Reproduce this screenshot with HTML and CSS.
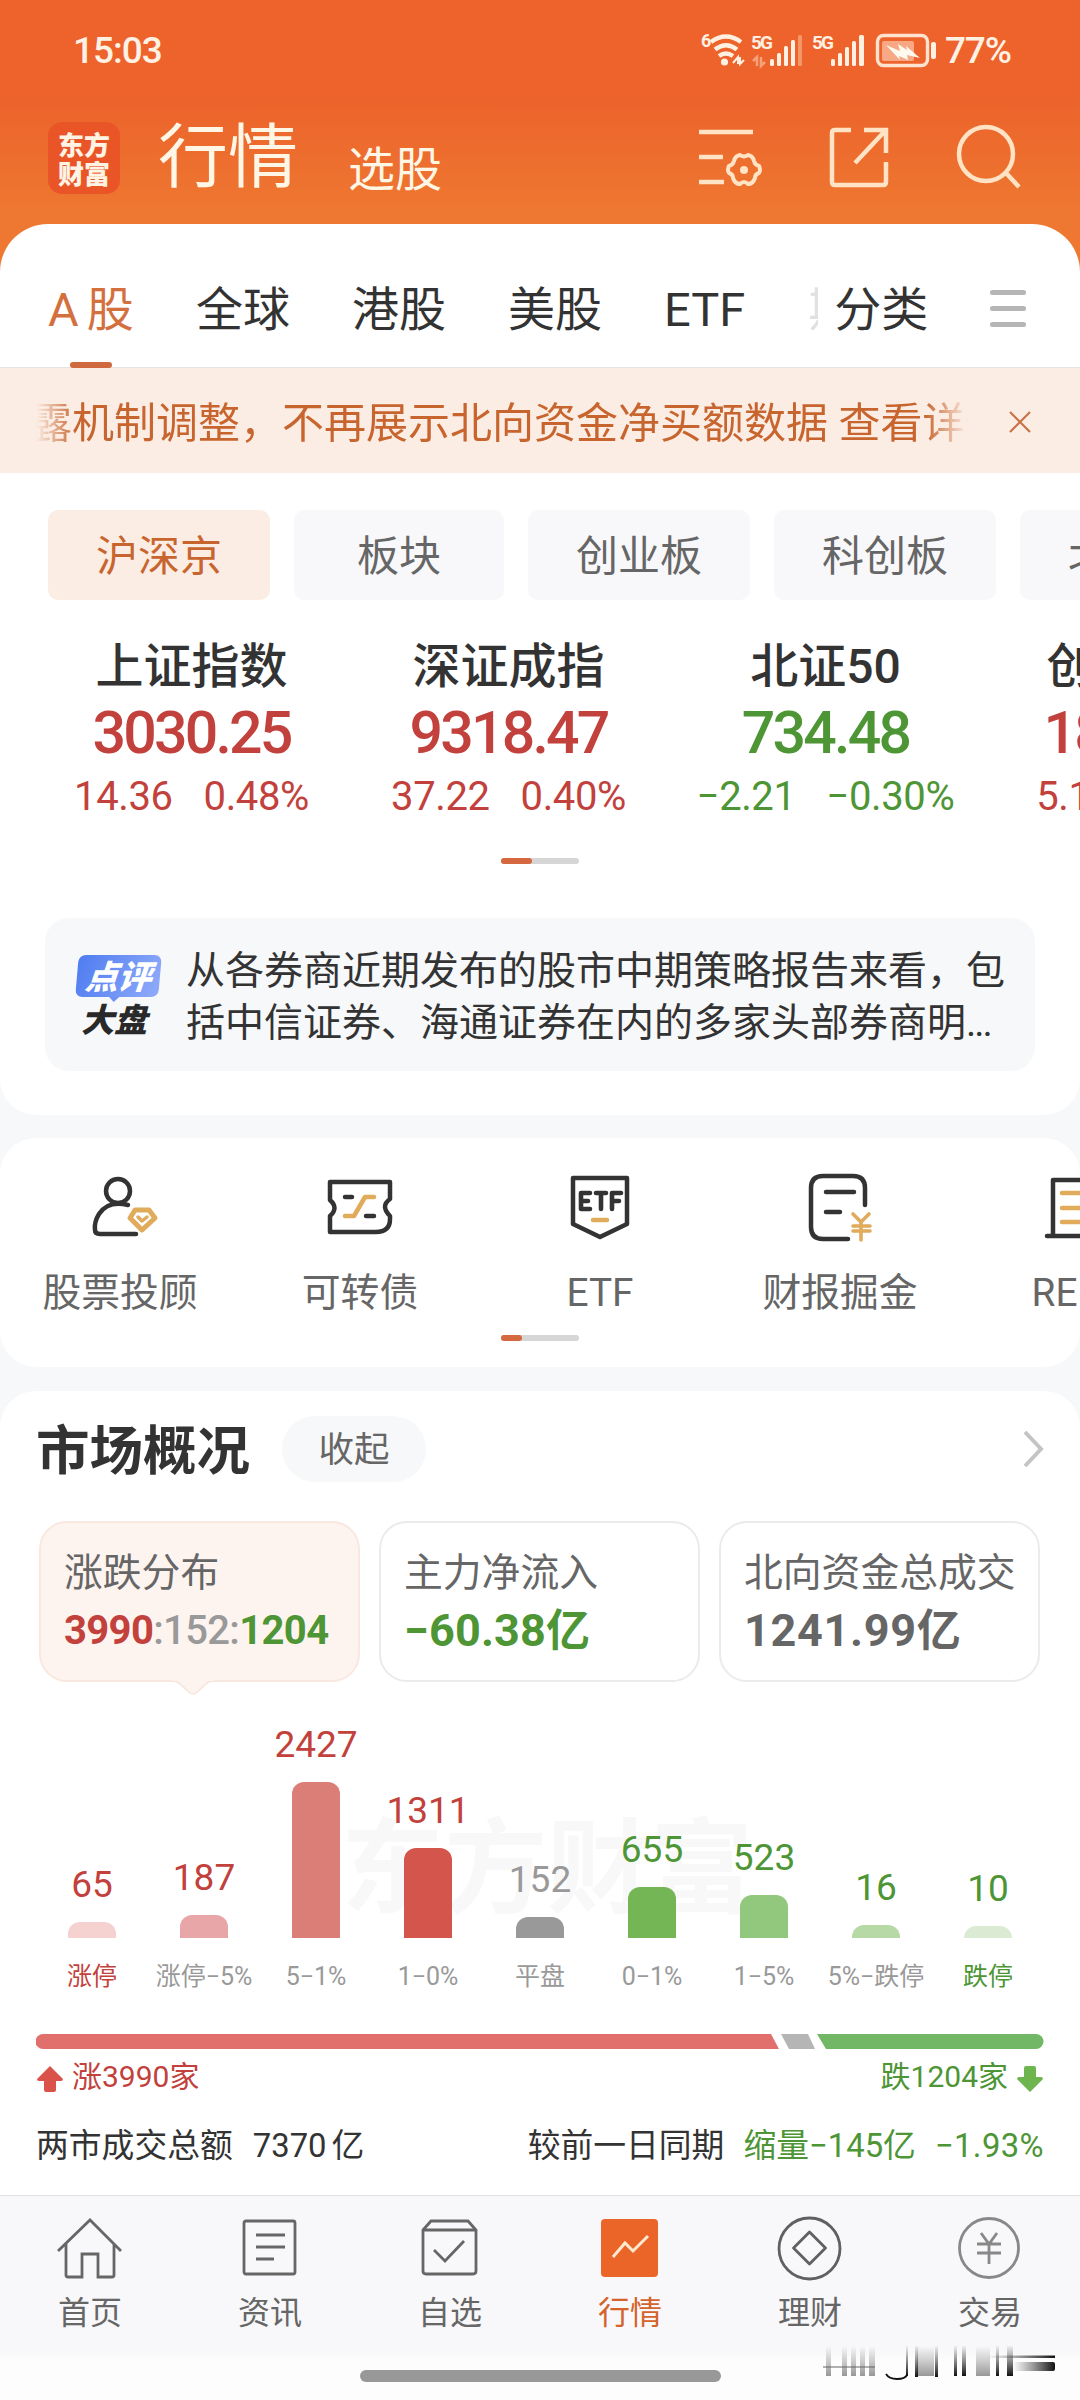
FILE: index.html
```html
<!DOCTYPE html>
<html lang="zh-CN">
<head>
<meta charset="utf-8">
<title>行情</title>
<link rel="stylesheet" href="styles.css">
</head>
<body>
<div class="app">
  <header class="top">
    <div class="status">
      <span class="time">15:03</span>
      <svg class="status-icons" width="240" height="40" viewBox="0 0 240 40" fill="none">
        <text x="1" y="17" class="tiny">6</text>
        <g stroke="#fff0e2" stroke-width="4.4">
          <path d="M11 12Q26 1 41 12M15 19.500Q26 11 37 19.500M19 26Q26 21 33 26"/>
        </g>
        <circle cx="24.500" cy="32" r="3.600" fill="#fff0e2"/>
        <path d="M33 33l5-6v7M40 27v7l4-4" stroke="#fff0e2" stroke-width="2"/>
        <text x="51" y="19" class="tiny g">5G</text>
        <path d="M53 31l4-4v9M61 27v9l4-4" stroke="#f6a27b" stroke-width="2.500"/>
        <g fill="#fff0e2">
          <rect x="70" y="29" width="4" height="7" rx="1.500"/><rect x="77" y="23" width="4" height="13" rx="1.500"/><rect x="84" y="16" width="4" height="20" rx="1.500"/><rect x="91" y="10" width="4" height="26" rx="1.500"/>
          <rect x="98" y="5" width="4" height="31" rx="1.500" fill="#f59669"/>
          <rect x="131" y="29" width="4" height="7" rx="1.500"/><rect x="138" y="23" width="4" height="13" rx="1.500"/><rect x="145" y="17" width="4" height="19" rx="1.500"/><rect x="152" y="11" width="4" height="25" rx="1.500"/><rect x="159" y="5" width="5" height="31" rx="1.500"/>
          <rect x="231" y="12" width="5" height="17" rx="2"/>
        </g>
        <text x="112" y="19" class="tiny g">5G</text>
        <rect x="177.500" y="5.500" width="50" height="30" rx="6" stroke="#ffe3cf" stroke-width="3.400"/>
        <rect x="182" y="11" width="32" height="20" rx="2" fill="#f9a885"/>
        <path d="M186 15l14 6-2-7 9 6-1-4 14 12-13-3 1 5-9-4 1 4z" fill="#fffaf0"/>
      </svg>
      <span class="battery">77%</span>
    </div>
    <div class="titlebar">
      <div class="logo">东方<br>财富</div>
      <h1>行情</h1>
      <span class="pick">选股</span>
      <div class="tools">
        <svg width="66" height="68" viewBox="0 0 66 68" fill="none" stroke="#ffe3c4" stroke-width="4.500">
          <path d="M2 11h54M2 36h24M2 61h25"/>
          <path stroke-width="4" stroke-linejoin="round" d="M43 34q4 3 8 0q5 1 6 6q1 4 5 5q2 4 0 7q-4 1-4 5q-2 6-7 6q-4-4-8 0q-5 0-7-6q0-4-4-5q-2-3 0-7q4-1 5-5q1-5 6-6z"/>
          <circle cx="47" cy="49" r="4" fill="#ffe3c4" stroke="none"/>
        </svg>
        <svg width="62" height="68" viewBox="0 0 62 68" fill="none" stroke="#ffe3c4" stroke-width="4.500">
          <path d="M23 9H7Q4 9 4 12V61Q4 64 7 64H55Q58 64 58 61V41M36 9H58V32M57 10L27 42"/>
        </svg>
        <svg width="66" height="68" viewBox="0 0 66 68" fill="none" stroke="#ffe3c4" stroke-width="4.500">
          <circle cx="31" cy="33" r="27"/><path d="M51 52L64 66"/>
        </svg>
      </div>
    </div>
  </header>

  <main>
    <section class="card first">
      <nav class="tabs">
        <span class="tab on">A<i></i>股</span><span class="tab">全球</span><span class="tab">港股</span><span class="tab">美股</span><span class="tab">ETF</span>
        <span class="cut">期</span>
        <span class="sort">分类</span>
        <span class="menu"><i></i><i></i><i></i></span>
      </nav>
      <div class="notice">
        <p>露机制调整，不再展示北向资金净买额数据 查看详情</p>
        <svg width="22" height="22" viewBox="0 0 22 22" stroke="#c97346" stroke-width="2.200"><path d="M1 1L21 21M21 1L1 21"/></svg>
      </div>
      <div class="chips">
        <span class="chip on">沪深京</span><span class="chip short">板块</span><span class="chip">创业板</span><span class="chip">科创板</span><span class="chip">北交所</span>
      </div>
      <div class="indices">
        <div class="index up"><h3>上证指数</h3><b>3030.25</b><p><span>14.36</span><span>0.48%</span></p></div>
        <div class="index up"><h3>深证成指</h3><b>9318.47</b><p><span>37.22</span><span>0.40%</span></p></div>
        <div class="index down"><h3>北证50</h3><b>734.48</b><p><span>−2.21</span><span>−0.30%</span></p></div>
        <div class="index up"><h3>创业板指</h3><b>1802.91</b><p><span>5.16</span><span>0.29%</span></p></div>
      </div>
      <div class="pager"><i class="wide"></i></div>
      <div class="comment">
        <div class="badge">
          <span class="bubble"><em>点评</em></span>
          <em class="market">大盘</em>
        </div>
        <p>从各券商近期发布的股市中期策略报告来看，包<br>括中信证券、海通证券在内的多家头部券商明<span class="dots">...</span></p>
      </div>
    </section>

    <section class="card shortcuts">
      <div class="links">
        <div class="link">
          <svg width="80" height="76" viewBox="0 0 80 76" fill="none" stroke="#333" stroke-width="4.500" stroke-linecap="round" stroke-linejoin="round">
            <circle cx="38" cy="22" r="12"/>
            <path d="M48 36Q28 31 19 45Q14 53 15 61Q15 65 20 65H56"/>
            <path stroke="#e0ab5b" stroke-width="5" d="M55 41H69L75 49L62 61L50 49Z"/>
            <path stroke="#e0ab5b" stroke-width="3.500" d="M58 48L62 52L67 48"/>
          </svg>
          <span>股票投顾</span>
        </div>
        <div class="link">
          <svg width="80" height="76" viewBox="0 0 80 76" fill="none" stroke="#333" stroke-width="4.500" stroke-linecap="round" stroke-linejoin="round">
            <path d="M10 13H70V30Q60 37 70 47V50Q70 63 56 63H10V47Q19 39 10 31Z"/>
            <path d="M25 28H32M46 47H54"/><path stroke="#e0ab5b" d="M25 47H34L45 28H54"/>
          </svg>
          <span>可转债</span>
        </div>
        <div class="link">
          <svg width="80" height="76" viewBox="0 0 80 76" fill="none" stroke="#333" stroke-width="4.500" stroke-linecap="round" stroke-linejoin="round">
            <path d="M13 9H67V55L40 68L13 55Z"/>
            <path stroke-width="4.600" d="M30 24H21V40H30M21 32H28M36 24H46M41 24V40M61 24H52V40M52 32H59"/>
            <path stroke="#e0ab5b" d="M33 51H47"/>
          </svg>
          <span>ETF</span>
        </div>
        <div class="link">
          <svg width="80" height="76" viewBox="-7 0 80 76" fill="none" stroke="#333" stroke-width="4.500" stroke-linecap="round" stroke-linejoin="round">
            <path d="M58 36V19Q58 7 46 7H16Q4 7 4 19V58Q4 70 16 70H41M19 23H47M19 43H33"/>
            <path stroke="#e0ab5b" stroke-width="3.600" d="M46 45L54 53L62 45M46 57H63M46 62H63M54 53V71"/>
          </svg>
          <span>财报掘金</span>
        </div>
        <div class="link">
          <svg width="80" height="76" viewBox="0 0 80 76" fill="none" stroke="#333" stroke-width="4.500" stroke-linecap="round" stroke-linejoin="round">
            <path d="M13 67V11H66V67M7 67H73"/><path stroke="#e0ab5b" d="M22 24H56M22 39H56M22 53H56"/>
          </svg>
          <span>REITs</span>
        </div>
      </div>
      <div class="pager"><i></i></div>
    </section>

    <section class="card overview">
      <div class="heading">
        <h2>市场概况</h2><span class="fold">收起</span>
        <svg width="22" height="38" viewBox="0 0 22 38" fill="none" stroke="#c4c4c4" stroke-width="4"><path d="M3 2L19 19L3 36"/></svg>
      </div>
      <div class="boxes">
        <div class="box on"><h4>涨跌分布</h4><b class="ratio"><span class="red">3990</span><span class="gray">:152:</span><span class="green">1204</span></b>
          <svg class="tip" width="40" height="16" viewBox="0 0 40 16"><path d="M0 1Q4 1 7 4L17 13Q20 15 23 13L33 4Q36 1 40 1" fill="#fdf4f0" stroke="#f7e3da" stroke-width="1.500"/><path d="M0 0H40V1H0Z" fill="#fdf4f0"/></svg>
        </div>
        <div class="box"><h4>主力净流入</h4><b class="green">−60.38<span>亿</span></b></div>
        <div class="box"><h4>北向资金总成交</h4><b class="wider">1241.99<span>亿</span></b></div>
      </div>
      <div class="chart">
        <span class="watermark">东方财富</span>
        <div class="col red"><span>65</span><i class="bar" style="height:16px;background:#f5d1d0"></i><small>涨停</small></div>
        <div class="col red"><span>187</span><i class="bar" style="height:23px;background:#e9a6a9"></i><small class="mute">涨停−5%</small></div>
        <div class="col red"><span>2427</span><i class="bar" style="height:156px;background:#dc7e78"></i><small class="mute">5−1%</small></div>
        <div class="col red"><span>1311</span><i class="bar" style="height:90px;background:#d4554c"></i><small class="mute">1−0%</small></div>
        <div class="col gray"><span>152</span><i class="bar" style="height:21px;background:#999"></i><small class="mute">平盘</small></div>
        <div class="col green"><span>655</span><i class="bar" style="height:51px;background:#74b655"></i><small class="mute">0−1%</small></div>
        <div class="col green"><span>523</span><i class="bar" style="height:43px;background:#92c87d"></i><small class="mute">1−5%</small></div>
        <div class="col green"><span>16</span><i class="bar" style="height:13px;background:#b6d9a5"></i><small class="mute">5%−跌停</small></div>
        <div class="col green"><span>10</span><i class="bar" style="height:12px;background:#dbebd3"></i><small>跌停</small></div>
      </div>
      <svg class="split" width="1008" height="15" viewBox="0 0 1008 15">
        <path d="M7 0H735L743 15H7A7.500 7.500 0 0 1 7 0Z" fill="#e1706d"/><path d="M745 0H772L779 15H753Z" fill="#b5b5b5"/><path d="M781 0H1000A7.500 7.500 0 0 1 1000 15H790Z" fill="#72b765"/>
      </svg>
      <div class="counts">
        <span class="red"><svg width="26" height="26" viewBox="0 0 26 26" fill="#d9534a"><path d="M13 0L26 13Q26 15 24 15H19V24Q19 26 17 26H9Q7 26 7 24V15H2Q0 15 0 13Z"/></svg>涨3990家</span>
        <span class="green">跌1204家<svg width="26" height="26" viewBox="0 0 26 26" fill="#6fb54f"><path d="M13 26L26 13Q26 11 24 11H19V2Q19 0 17 0H9Q7 0 7 2V11H2Q0 11 0 13Z"/></svg></span>
      </div>
      <div class="turnover">
        <span>两市成交总额</span><span class="amount">7370<i></i>亿</span>
        <span class="prev">较前一日同期</span><span class="green vol">缩量−145亿</span><span class="green rate">−1.93%</span>
      </div>
    </section>
  </main>

  <footer class="tabbar">
    <div class="items">
      <div class="item"><svg width="68" height="66" viewBox="0 0 68 66" fill="none" stroke="#666" stroke-width="2.800"><path d="M2 36L34 5L65 36M10 29V60Q10 62 12 62H26V39H42V62H56Q58 62 58 60V29"/></svg><span>首页</span></div>
      <div class="item"><svg width="68" height="66" viewBox="0 0 68 66" fill="none" stroke="#666" stroke-width="2.800"><rect x="8" y="6" width="51" height="53" rx="2"/><path d="M20 20H49M20 32H49M20 44H38"/></svg><span>资讯</span></div>
      <div class="item"><svg width="68" height="66" viewBox="0 0 68 66" fill="none" stroke="#666" stroke-width="2.800"><path d="M7 15L15 6H52L60 15V56Q60 59 57 59H10Q7 59 7 56ZM7 15H60"/><path d="M18 35L29 46L48 26"/></svg><span>自选</span></div>
      <div class="item on"><svg width="68" height="66" viewBox="0 0 68 66" fill="none"><rect x="5" y="4" width="57" height="58" rx="4" fill="#eb6428"/><path d="M17 42L29 28L37 36L52 21" stroke="#ffe9cf" stroke-width="3"/></svg><span>行情</span></div>
      <div class="item"><svg width="68" height="66" viewBox="0 0 68 66" fill="none" stroke="#606060" stroke-width="2.800"><circle cx="33.500" cy="33.500" r="30.500"/><path stroke-linejoin="round" d="M33.500 17L49.500 33L33.500 49L17.500 33Z"/></svg><span>理财</span></div>
      <div class="item"><svg width="68" height="66" viewBox="0 0 68 66" fill="none" stroke="#888" stroke-width="2.800"><circle cx="33" cy="33" r="29.500"/><path d="M25 18L33 29L41 18M21 29H45M21 38H45M33 29V49"/></svg><span>交易</span></div>
    </div>
    <div class="gesture"><i></i></div>
    <svg class="smear" width="236" height="42" viewBox="0 0 236 42">
      <defs>
        <linearGradient id="down" x1="0" y1="0" x2="0" y2="1"><stop offset="0" stop-color="#555" stop-opacity="0"/><stop offset="1" stop-color="#444" stop-opacity=".55"/></linearGradient>
        <linearGradient id="dark" x1="0" y1="0" x2="0" y2="1"><stop offset="0" stop-color="#333" stop-opacity=".05"/><stop offset="1" stop-color="#111"/></linearGradient>
        <linearGradient id="side" x1="0" y1="0" x2="1" y2="0"><stop offset="0" stop-color="#444" stop-opacity="0"/><stop offset="1" stop-color="#111"/></linearGradient>
      </defs>
      <g fill="url(#down)"><rect x="3" y="1" width="5" height="30"/><rect x="19" y="1" width="5" height="30"/><rect x="28" y="1" width="5" height="30"/><rect x="37" y="1" width="5" height="30"/><rect x="46" y="1" width="6" height="30"/><rect x="94" y="1" width="17" height="30"/><rect x="153" y="1" width="14" height="30"/></g>
      <g fill="url(#dark)"><rect x="83" y="1" width="2" height="30"/><rect x="92" y="1" width="3" height="31"/><rect x="112" y="1" width="3" height="31"/><rect x="131" y="1" width="3" height="30"/><rect x="139" y="1" width="4" height="30"/><rect x="173" y="1" width="3" height="30"/><rect x="184" y="1" width="6" height="30"/></g>
      <path d="M63 29Q66 34 74 34Q82 34 84 30" fill="none" stroke="#111" stroke-width="1.800"/>
      <rect x="0" y="21" width="52" height="2" fill="#666" fill-opacity=".5"/>
      <rect x="165" y="10.500" width="67" height="2.500" fill="url(#side)"/><rect x="190" y="17" width="42" height="9" rx="2" fill="url(#side)"/>
    </svg>
  </footer>
</div>
</body>
</html>
```

FILE: styles.css
```css
* { box-sizing: border-box; margin: 0; padding: 0; }
i { font-style: normal; }
html, body { width: 1080px; height: 2400px; overflow: hidden; }
body { font-family: Roboto, "Noto Sans CJK SC", sans-serif; color: #333; background: #f7f8fa; }
.app { display: flex; flex-direction: column; width: 1080px; height: 2400px; overflow: hidden; }
svg { display: block; flex: none; }
.red { color: #c2413c; }
.green { color: #4d9535; }
.gray { color: #999; }

/* header */
.top { height: 275px; margin-bottom: -50px; background: linear-gradient(#ee632b 0, #ec632b 100px, #ee7831 215px, #ee7831 100%); }
.status { display: flex; align-items: center; height: 100px; padding: 0 66px 0 73px; color: #fff1e4; font-size: 37px; font-weight: 500; }
.time { letter-spacing: -1px; }
.status-icons { margin: 0 5px 0 auto; }
.tiny { font: 700 18px Roboto, sans-serif; fill: #fff0e2; }
.tiny.g { font-size: 19px; letter-spacing: -2px; }
.battery { width: 69px; letter-spacing: -1.200px; }
.titlebar { display: flex; align-items: center; height: 116px; padding: 0 58px 0 48px; color: #fff6e6; }
.logo { width: 72px; height: 72px; padding-top: 7px; border-radius: 14px; background: #ea5528; color: #fff3e4; font: 900 26px/29px "Noto Sans CJK SC", sans-serif; text-align: center; }
.titlebar h1 { margin-left: 38px; font-size: 70px; line-height: 76px; font-weight: 400; }
.pick { margin-left: 50px; font-size: 47px; line-height: 60px; padding-top: 24px; }
.tools { display: flex; margin-left: auto; gap: 65px; width: 325px; padding-bottom: 6px; }

/* cards */
.card { background: #fff; position: relative; }
.first { height: 891px; border-radius: 48px 48px 36px 36px; overflow: hidden; }
.tabs { display: flex; align-items: center; height: 144px; padding: 28px 0 0 48px; border-bottom: 1px solid #e6e2df; font-size: 47px; line-height: 60px; }
.tab { margin-right: 62px; position: relative; }
.tab.on { color: #d4703e; width: 86px; white-space: nowrap; }
.tab.on i { display: inline-block; width: 8px; }
.tab.on::after { content: ""; position: absolute; left: 22px; bottom: -28px; width: 42px; height: 6px; border-radius: 3px; background: #d06a3e; }
.cut { width: 10px; margin-left: 1px; overflow: hidden; color: #333; opacity: .14; }
.sort { margin-left: 16px; }
.menu { display: flex; flex-direction: column; gap: 11px; width: 36px; margin: -3px 54px 0 auto; }
.menu i { height: 5px; border-radius: 3px; background: #b5b5b5; }
.notice { display: flex; align-items: center; height: 105px; padding: 2px 49px 0 30px; background: #fbede4; color: #c8652f; }
.notice p { width: 939px; overflow: hidden; white-space: nowrap; font-size: 42px; line-height: 60px; padding-top: 4px; mask-image: linear-gradient(90deg, transparent 6px, #000 46px, #000 895px, transparent 938px); }
.notice svg { margin-left: auto; }
.chips { display: flex; gap: 24px; width: 1300px; padding: 37px 0 0 48px; }
.chip { width: 222px; height: 90px; border-radius: 10px; background: #f8f8fa; color: #666; font-size: 42px; line-height: 94px; text-align: center; flex: none; }
.chip.short { width: 210px; }
.chip.on { background: #fbede4; color: #c8652f; }
.indices { display: flex; width: 1300px; margin-left: 33px; padding-top: 37px; }
.index { width: 317px; text-align: center; }
.index h3 { font-size: 48px; line-height: 60px; font-weight: 500; color: #333; }
.index b { display: block; margin-top: 4px; font-size: 59px; line-height: 64px; font-weight: 500; letter-spacing: -2.800px; }
.index p { display: flex; justify-content: center; gap: 31px; margin-top: 7px; font-size: 40px; line-height: 50px; letter-spacing: -.4px; }
.index.up { color: #c2413c; }
.index.down { color: #4d9535; }
.pager { width: 78px; height: 6px; margin: 36px auto 0; border-radius: 3px; background: #d6d6d6; }
.pager i { display: block; width: 21px; height: 6px; border-radius: 3px; background: #d5683f; }
.pager i.wide { width: 31px; }
.comment { display: flex; width: 990px; height: 153px; margin: 54px 0 0 45px; padding: 27px 0 0 29px; border-radius: 24px; background: #f7f8fa; }
.badge { display: flex; flex-direction: column; width: 112px; padding: 10px 0 0 3px; }
.bubble { width: 83px; height: 42px; border-radius: 7px; background: linear-gradient(110deg, #4f7cf0, #8fabfa); transform: skewX(-5deg); color: #fff; text-align: center; position: relative; }
.bubble::after { content: ""; position: absolute; left: 34px; bottom: -5px; border: 5px solid transparent; border-top-color: #6d92f4; border-bottom: 0; }
.badge em { font: italic 900 33px/40px "Noto Sans CJK SC", sans-serif; display: block; }
.badge .market { margin: 1px 0 0 4px; font-size: 33px; line-height: 40px; color: #292929; }
.comment p { font-size: 39px; line-height: 52px; color: #333; white-space: nowrap; }
.dots { letter-spacing: -2px; }

.shortcuts { height: 229px; margin-top: 23px; padding-top: 31px; border-radius: 36px; overflow: hidden; }
.links { display: flex; width: 1200px; }
.link { display: flex; flex-direction: column; align-items: center; width: 240px; color: #666; font-size: 38.800px; line-height: 50px; }
.link span { margin-top: 23px; }
.shortcuts .pager { margin-top: 17px; }

.overview { height: 804px; margin-top: 24px; padding: 0 36px; border-radius: 36px 36px 0 0; }
.heading { display: flex; align-items: center; height: 116px; }
.heading h2 { padding-top: 5px; font-size: 53.500px; line-height: 70px; font-weight: 700; }
.fold { width: 144px; height: 66px; margin-left: 32px; border-radius: 33px; background: #f6f8f9; color: #666; font-size: 35.500px; line-height: 69px; text-align: center; }
.heading svg { margin-left: auto; }
.boxes { display: flex; gap: 19px; margin: 14px 0 0 3px; }
.box { width: 321px; height: 161px; padding: 25px 0 0 23px; border: 2px solid #ebebeb; border-radius: 28px; color: #666; position: relative; }
.box.on { background: #fdf4f0; border-color: #f9e8df; }
.box h4 { font-size: 38.800px; line-height: 50px; font-weight: 400; white-space: nowrap; }
.box b { display: block; margin-top: 5px; font-size: 45px; line-height: 56px; font-weight: 700; letter-spacing: .1px; white-space: nowrap; }
.box b.wider { letter-spacing: .700px; }
.box b span { font-size: 44px; }
.box .ratio, .box .ratio span { font-size: 40px; letter-spacing: -.650px; }
.ratio .gray { font-weight: 500; }
.tip { position: absolute; left: 132px; bottom: -16px; }
.chart { display: flex; align-items: flex-end; height: 313px; position: relative; }
.col { display: flex; flex-direction: column; align-items: center; width: 112px; position: relative; white-space: nowrap; }
.col span { font-size: 37px; line-height: 38px; margin-bottom: 18px; }
.bar { width: 48px; border-radius: 12px 12px 0 0; }
.col small { width: 112px; margin-top: 21px; font-size: 25px; line-height: 36px; text-align: center; }
.mute { color: #999; }
.watermark { position: absolute; left: 305px; top: 119px; font: 700 103px/120px "Noto Sans CJK SC", sans-serif; color: #f8f8f9; }
.split { margin-top: 39px; }
.counts { display: flex; justify-content: space-between; margin-top: 10px; font-size: 30px; line-height: 36px; }
.counts span { display: flex; align-items: center; gap: 9px; padding: 0 1px; }
.counts svg { margin-top: 3px; }
.turnover { display: flex; margin-top: 31px; font-size: 32.800px; line-height: 40px; white-space: nowrap; }
.amount { margin-left: 20px; }
.amount i { display: inline-block; width: 5px; }
.prev { margin-left: auto; }
.vol { margin: 0 19px; }
.rate { letter-spacing: .4px; }

/* bottom bar */
.tabbar { height: 205px; border-top: 1px solid #e1e1e3; background: linear-gradient(#f8f8fa 155px, #fdfdfd 165px); position: relative; }
.items { display: flex; padding-top: 19px; }
.item { display: flex; flex-direction: column; align-items: center; width: 180px; color: #666; font-size: 32px; line-height: 40px; }
.item span { margin-top: 12px; }
.item.on { color: #d4632c; }
.gesture { display: flex; justify-content: center; padding-top: 37px; }
.gesture i { width: 361px; height: 12px; border-radius: 6px; background: #989898; }
.smear { position: absolute; left: 823px; top: 149px; }
```
